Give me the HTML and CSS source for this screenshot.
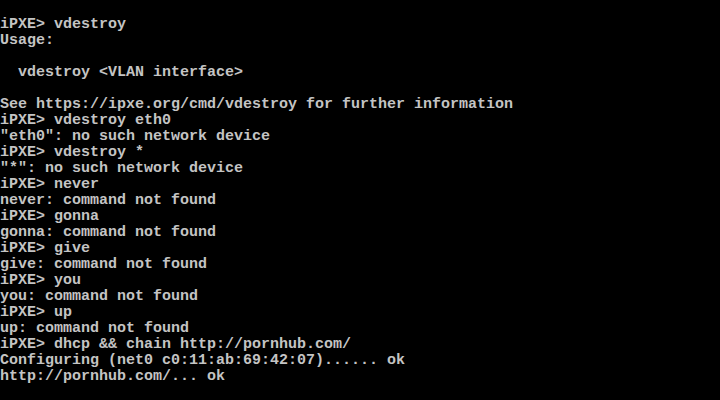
FILE: index.html
```html
<html lang="en">
<head>
  <meta charset="UTF-8">
  <title>iPXE console</title>
  <link rel="stylesheet" href="styles.css">
</head>
<body>

<div class="screen">
<pre class="console">iPXE&gt; vdestroy
Usage:

  vdestroy &lt;VLAN interface&gt;

See https://ipxe.org/cmd/vdestroy for further information
iPXE&gt; vdestroy eth0
"eth0": no such network device
iPXE&gt; vdestroy *
"*": no such network device
iPXE&gt; never
never: command not found
iPXE&gt; gonna
gonna: command not found
iPXE&gt; give
give: command not found
iPXE&gt; you
you: command not found
iPXE&gt; up
up: command not found
iPXE&gt; dhcp &amp;&amp; chain http://pornhub.com/
Configuring (net0 c0:11:ab:69:42:07)...... ok
http://pornhub.com/... ok</pre>
</div>

</body>
</html>
```

FILE: styles.css
```css
body {
  margin: 0;
  padding: 0;
  background-color: #000;
}

.screen {
  width: 720px;
  height: 400px;
  background-color: #000;
  overflow: hidden;
}

.console {
  margin: 0;
  padding: 17px 0 0 0;
  font-family: "Liberation Mono", monospace;
  font-size: 15px;
  font-weight: bold;
  line-height: 16px;
  color: #c4c4c4;
}
```
